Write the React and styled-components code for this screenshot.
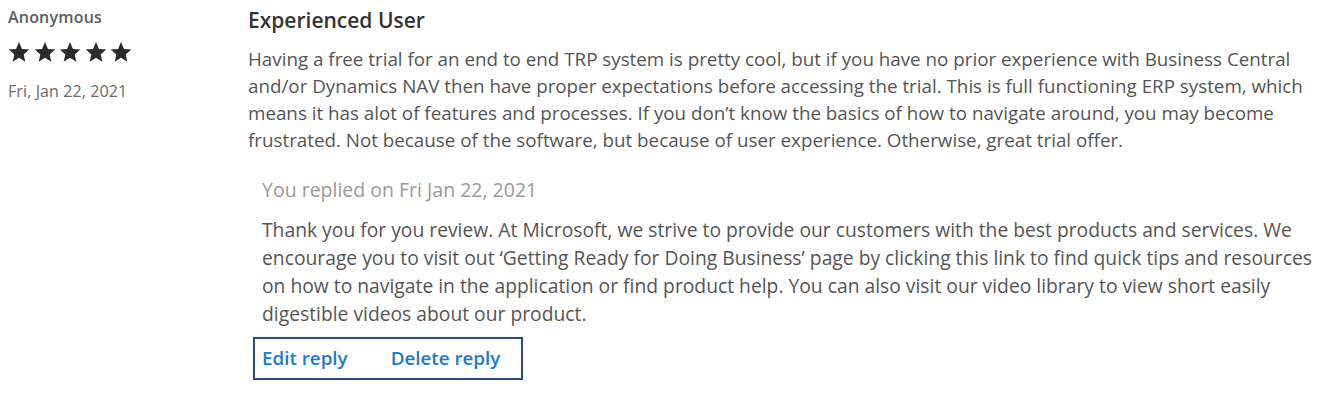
import React from "react";
import styled, { createGlobalStyle } from "styled-components";

const Global = createGlobalStyle`
  html, body { margin: 0; padding: 0; background: #fff; }
  body { font-family: "Open Sans", "Noto Sans", sans-serif; color: #505050; }
`;

const Review = styled.div`
  display: flex;
  padding: 6px 0 0 8px;
  width: 1328px;
  box-sizing: border-box;
`;

const Meta = styled.div`
  width: 240px;
  flex: none;
  display: flex;
  flex-direction: column;
`;

const Author = styled.div`
  font-size: 16px;
  font-weight: 600;
  color: #5c5c5c;
  line-height: 22px;
  letter-spacing: 0.2px;
`;

const Stars = styled.div`
  display: flex;
  gap: 3.5px;
  margin-top: 13px;
  height: 22px;
`;

const Star = styled.svg`
  width: 22px;
  height: 22px;
  fill: #2b2b2b;
  display: block;
`;

const DateText = styled.div`
  margin-top: 17px;
  font-size: 16px;
  color: #6a6a6a;
  line-height: 22px;
  letter-spacing: 0.1px;
`;

const Body = styled.div`
  flex: none;
  width: 1075px;
`;

const Title = styled.h3`
  margin: 0;
  font-size: 21px;
  font-weight: 600;
  color: #333;
  line-height: 28px;
`;

const Text = styled.p`
  margin: 12px 0 0;
  font-size: 18.8px;
  line-height: 27px;
  color: #555;
`;

const Reply = styled.div`
  margin-top: 23px;
  padding-left: 14px;
`;

const ReplyHead = styled.div`
  font-size: 19.5px;
  color: #9a9a9a;
  line-height: 26px;
`;

const ReplyText = styled.p`
  margin: 13px 0 0;
  max-width: 1060px;
  font-size: 19.3px;
  line-height: 28px;
  color: #555;
`;

const Actions = styled.div`
  display: inline-flex;
  gap: 43px;
  margin: 9px 0 0 -9px;
  padding: 6px 21px 6px 7px;
  border: 2px solid #2a4b8d;
`;

const ActionLink = styled.a`
  font-size: 18.8px;
  font-weight: 600;
  color: #1a7ad4;
  text-decoration: none;
  line-height: 27px;
  cursor: pointer;
`;

const StarIcon = () => (
  <Star viewBox="0 0 24 24">
    <path d="M12 1.2l3.2 7.4 8 .7-6.1 5.3 1.8 7.9L12 18.3l-6.9 4.2 1.8-7.9L.8 9.3l8-.7z" />
  </Star>
);

export default function App() {
  return (
    <>
      <Global />
      <Review>
        <Meta>
          <Author>Anonymous</Author>
          <Stars>
            {[0, 1, 2, 3, 4].map((i) => (
              <StarIcon key={i} />
            ))}
          </Stars>
          <DateText>Fri, Jan 22, 2021</DateText>
        </Meta>
        <Body>
          <Title>Experienced User</Title>
          <Text>
            Having a free trial for an end to end TRP system is pretty cool, but if you have no prior experience with Business Central and/or Dynamics NAV then have proper expectations before accessing the trial. This is full functioning ERP system, which means it has alot of features and processes. If you don’t know the basics of how to navigate around, you may become frustrated. Not because of the software, but because of user experience. Otherwise, great trial offer.
          </Text>
          <Reply>
            <ReplyHead>You replied on Fri Jan 22, 2021</ReplyHead>
            <ReplyText>
              Thank you for you review. At Microsoft, we strive to provide our customers with the best products and services. We encourage you to visit out ‘Getting Ready for Doing Business’ page by clicking this link to find quick tips and resources on how to navigate in the application or find product help. You can also visit our video library to view short easily digestible videos about our product.
            </ReplyText>
            <Actions>
              <ActionLink>Edit reply</ActionLink>
              <ActionLink>Delete reply</ActionLink>
            </Actions>
          </Reply>
        </Body>
      </Review>
    </>
  );
}
